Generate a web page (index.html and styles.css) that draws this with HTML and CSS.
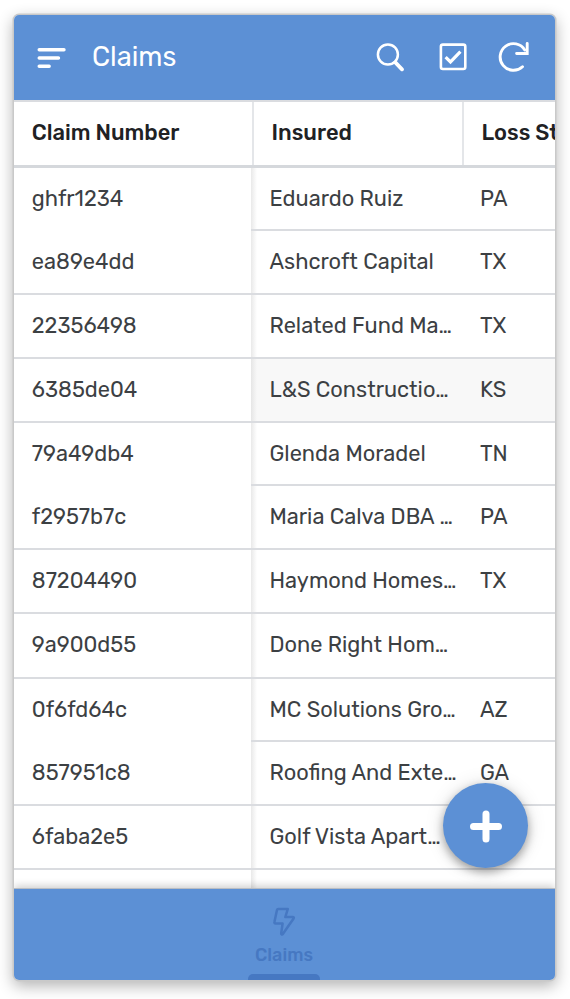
FILE: index.html
```html
<!DOCTYPE html>
<html lang="en">
<head>
<meta charset="utf-8">
<title>Claims</title>
<link rel="stylesheet" href="styles.css">
</head>
<body>
<main class="app">
  <header class="topbar">
    <svg class="menu" width="30" height="24" viewBox="0 0 30 24" fill="none" stroke="#fff" stroke-width="3.4" stroke-linecap="round"><path d="M2.2 3.8H27M2.2 12H21.5M2.2 20.2H12.2"/></svg>
    <h1 class="title">Claims</h1>
    <div class="actions">
      <svg width="30" height="30" viewBox="0 0 30 30" fill="none" stroke="#fff" stroke-linecap="round"><circle cx="12.9" cy="12.5" r="10" stroke-width="2.5"/><path d="M20.3 20.4L27 27.4" stroke-width="3.7"/></svg>
      <svg width="30" height="30" viewBox="0 0 30 30" fill="none" stroke="#fff"><rect x="2.9" y="2.6" width="24.4" height="24.4" rx="2" stroke-width="2.6"/><path d="M7.6 15.1L12.5 19.9L22.4 9.7" stroke-width="3.2"/></svg>
      <svg class="refresh" width="34" height="34" viewBox="0 0 34 34" fill="none" stroke="#fff" stroke-width="2.9" stroke-linecap="round"><path d="M26.5 26.7A13.3 13.3 0 1 1 28.8 10"/><path d="M31.2 3.5V13.5H20.6" stroke-linejoin="miter"/></svg>
    </div>
  </header>
  <div class="head">
    <div class="th">Claim Number</div><div class="th">Insured</div><div class="th">Loss State</div>
  </div>
  <div class="table">
    <div class="ids">
      <div class="cell short open">ghfr1234</div>
      <div class="cell">ea89e4dd</div>
      <div class="cell">22356498</div>
      <div class="cell">6385de04</div>
      <div class="cell short open">79a49db4</div>
      <div class="cell">f2957b7c</div>
      <div class="cell">87204490</div>
      <div class="cell tall">9a900d55</div>
      <div class="cell short open">0f6fd64c</div>
      <div class="cell">857951c8</div>
      <div class="cell">6faba2e5</div>
    </div>
    <div class="details">
      <div class="cell short"><span>Eduardo Ruiz</span><span>PA</span></div>
      <div class="cell"><span>Ashcroft Capital</span><span>TX</span></div>
      <div class="cell"><span>Related Fund Ma…</span><span>TX</span></div>
      <div class="cell active"><span>L&amp;S Constructio…</span><span>KS</span></div>
      <div class="cell short"><span>Glenda Moradel</span><span>TN</span></div>
      <div class="cell"><span>Maria Calva DBA …</span><span>PA</span></div>
      <div class="cell"><span>Haymond Homes…</span><span>TX</span></div>
      <div class="cell tall"><span>Done Right Hom…</span><span></span></div>
      <div class="cell short"><span>MC Solutions Gro…</span><span>AZ</span></div>
      <div class="cell"><span>Roofing And Exte…</span><span>GA</span></div>
      <div class="cell"><span>Golf Vista Apart…</span><span></span></div>
    </div>
  </div>
  <footer class="bottombar">
    <div class="tab">
      <svg width="24" height="30" viewBox="0 0 24 30" fill="none" stroke="#4678c2" stroke-width="2.5" stroke-linejoin="round"><path d="M6.3 2H15.8L13.3 10.1H20.8C21.7 10.1 22.1 10.7 21.6 11.5L11 26.8C10.2 28 9 27.6 9.2 26.2L10.6 16.5H3.5C2.6 16.5 2.2 15.9 2.4 15.1L5 3.1C5.1 2.4 5.6 2 6.3 2Z"/></svg>
      <span class="tab-label">Claims</span>
      <i class="indicator"></i>
    </div>
  </footer>
  <div class="fab"><svg width="32" height="34" viewBox="0 0 32 34" stroke="#fff" stroke-width="7" stroke-linecap="round"><path d="M3.5 17.5H28.5M16 5V30"/></svg></div>
</main>
</body>
</html>
```
FILE: styles.css
```css
* { box-sizing: border-box; }
body {
  margin: 0;
  padding: 15px 15px 19px 14px;
  height: 999px;
  overflow: hidden;
  background: #fff;
  font-family: Rubik, Roboto, "Liberation Sans", sans-serif;
  color: #3c4043;
}
.app {
  position: relative;
  width: 541px;
  height: 965px;
  display: flex;
  flex-direction: column;
  overflow: hidden;
  border-radius: 5px;
  background: #fff;
  box-shadow: 0 0 0 1.5px #c9c9c9, 0 5px 15px 1px rgba(0, 0, 0, .3);
}
.topbar {
  flex: none;
  height: 85px;
  display: flex;
  align-items: center;
  padding: 0 25px 1px 23px;
  background: #5c90d5;
  color: #fff;
}
.menu { margin-top: 1px; }
.title {
  margin: -1px 0 0 25px;
  font-size: 27.2px;
  font-weight: 450;
  line-height: 34px;
}
.actions {
  margin-left: auto;
  display: flex;
  align-items: center;
  gap: 33px;
}
.refresh { margin-left: -5px; }
.head {
  flex: none;
  height: 68px;
  display: grid;
  grid-template-columns: 238px 210px 93px;
  border-top: 2px solid #dadce0;
  border-bottom: 3px solid #d5d8dc;
}
.th {
  overflow: hidden;
  padding-left: 17.7px;
  line-height: 61px;
  font-size: 21.9px;
  font-weight: 500;
  color: #202124;
  white-space: nowrap;
}
.th + .th { border-left: 2px solid #e4e6e9; padding-left: 17.5px; }
.table {
  flex: 1;
  min-height: 0;
  display: grid;
  grid-template-columns: 237px 304px;
}
.cell {
  height: 64px;
  padding-left: 17.8px;
  border-bottom: 2px solid #dadce0;
  font-size: 21.8px;
  font-weight: 420;
  line-height: 62px;
  white-space: nowrap;
}
.short { height: 63px; }
.tall { height: 65px; }
.open { border-bottom-color: transparent; }
.details {
  display: flex;
  flex-direction: column;
  background: linear-gradient(90deg, #e9e9e9, #fff 6px);
}
.details .cell {
  flex: none;
  display: grid;
  grid-template-columns: 210.5px 1fr;
  padding-left: 18.5px;
}
.active { background: linear-gradient(90deg, #e6e6e6, #f8f8f8 6px); }
.bottombar {
  flex: none;
  height: 92px;
  display: flex;
  justify-content: center;
  padding-right: 1px;
  background: #5c90d5;
  border-top: 1px solid #b9bdc3;
  box-shadow: 0 -2px 8px rgba(0, 0, 0, .2);
}
.tab {
  width: 72px;
  display: flex;
  flex-direction: column;
  align-items: center;
  padding-top: 18px;
  color: #4678c2;
}
.tab-label { margin-top: 7px; font-size: 18px; font-weight: 550; line-height: 22px; }
.indicator {
  margin-top: auto;
  width: 72px;
  height: 6px;
  border-radius: 5px 5px 0 0;
  background: #4678c2;
}
.fab {
  position: absolute;
  right: 27px;
  bottom: 112px;
  width: 85px;
  height: 85px;
  display: grid;
  place-items: center;
  border-radius: 50%;
  background: #5c90d5;
  box-shadow: 0 4px 10px rgba(0, 0, 0, .35), 0 1px 20px rgba(0, 0, 0, .12);
}
```
